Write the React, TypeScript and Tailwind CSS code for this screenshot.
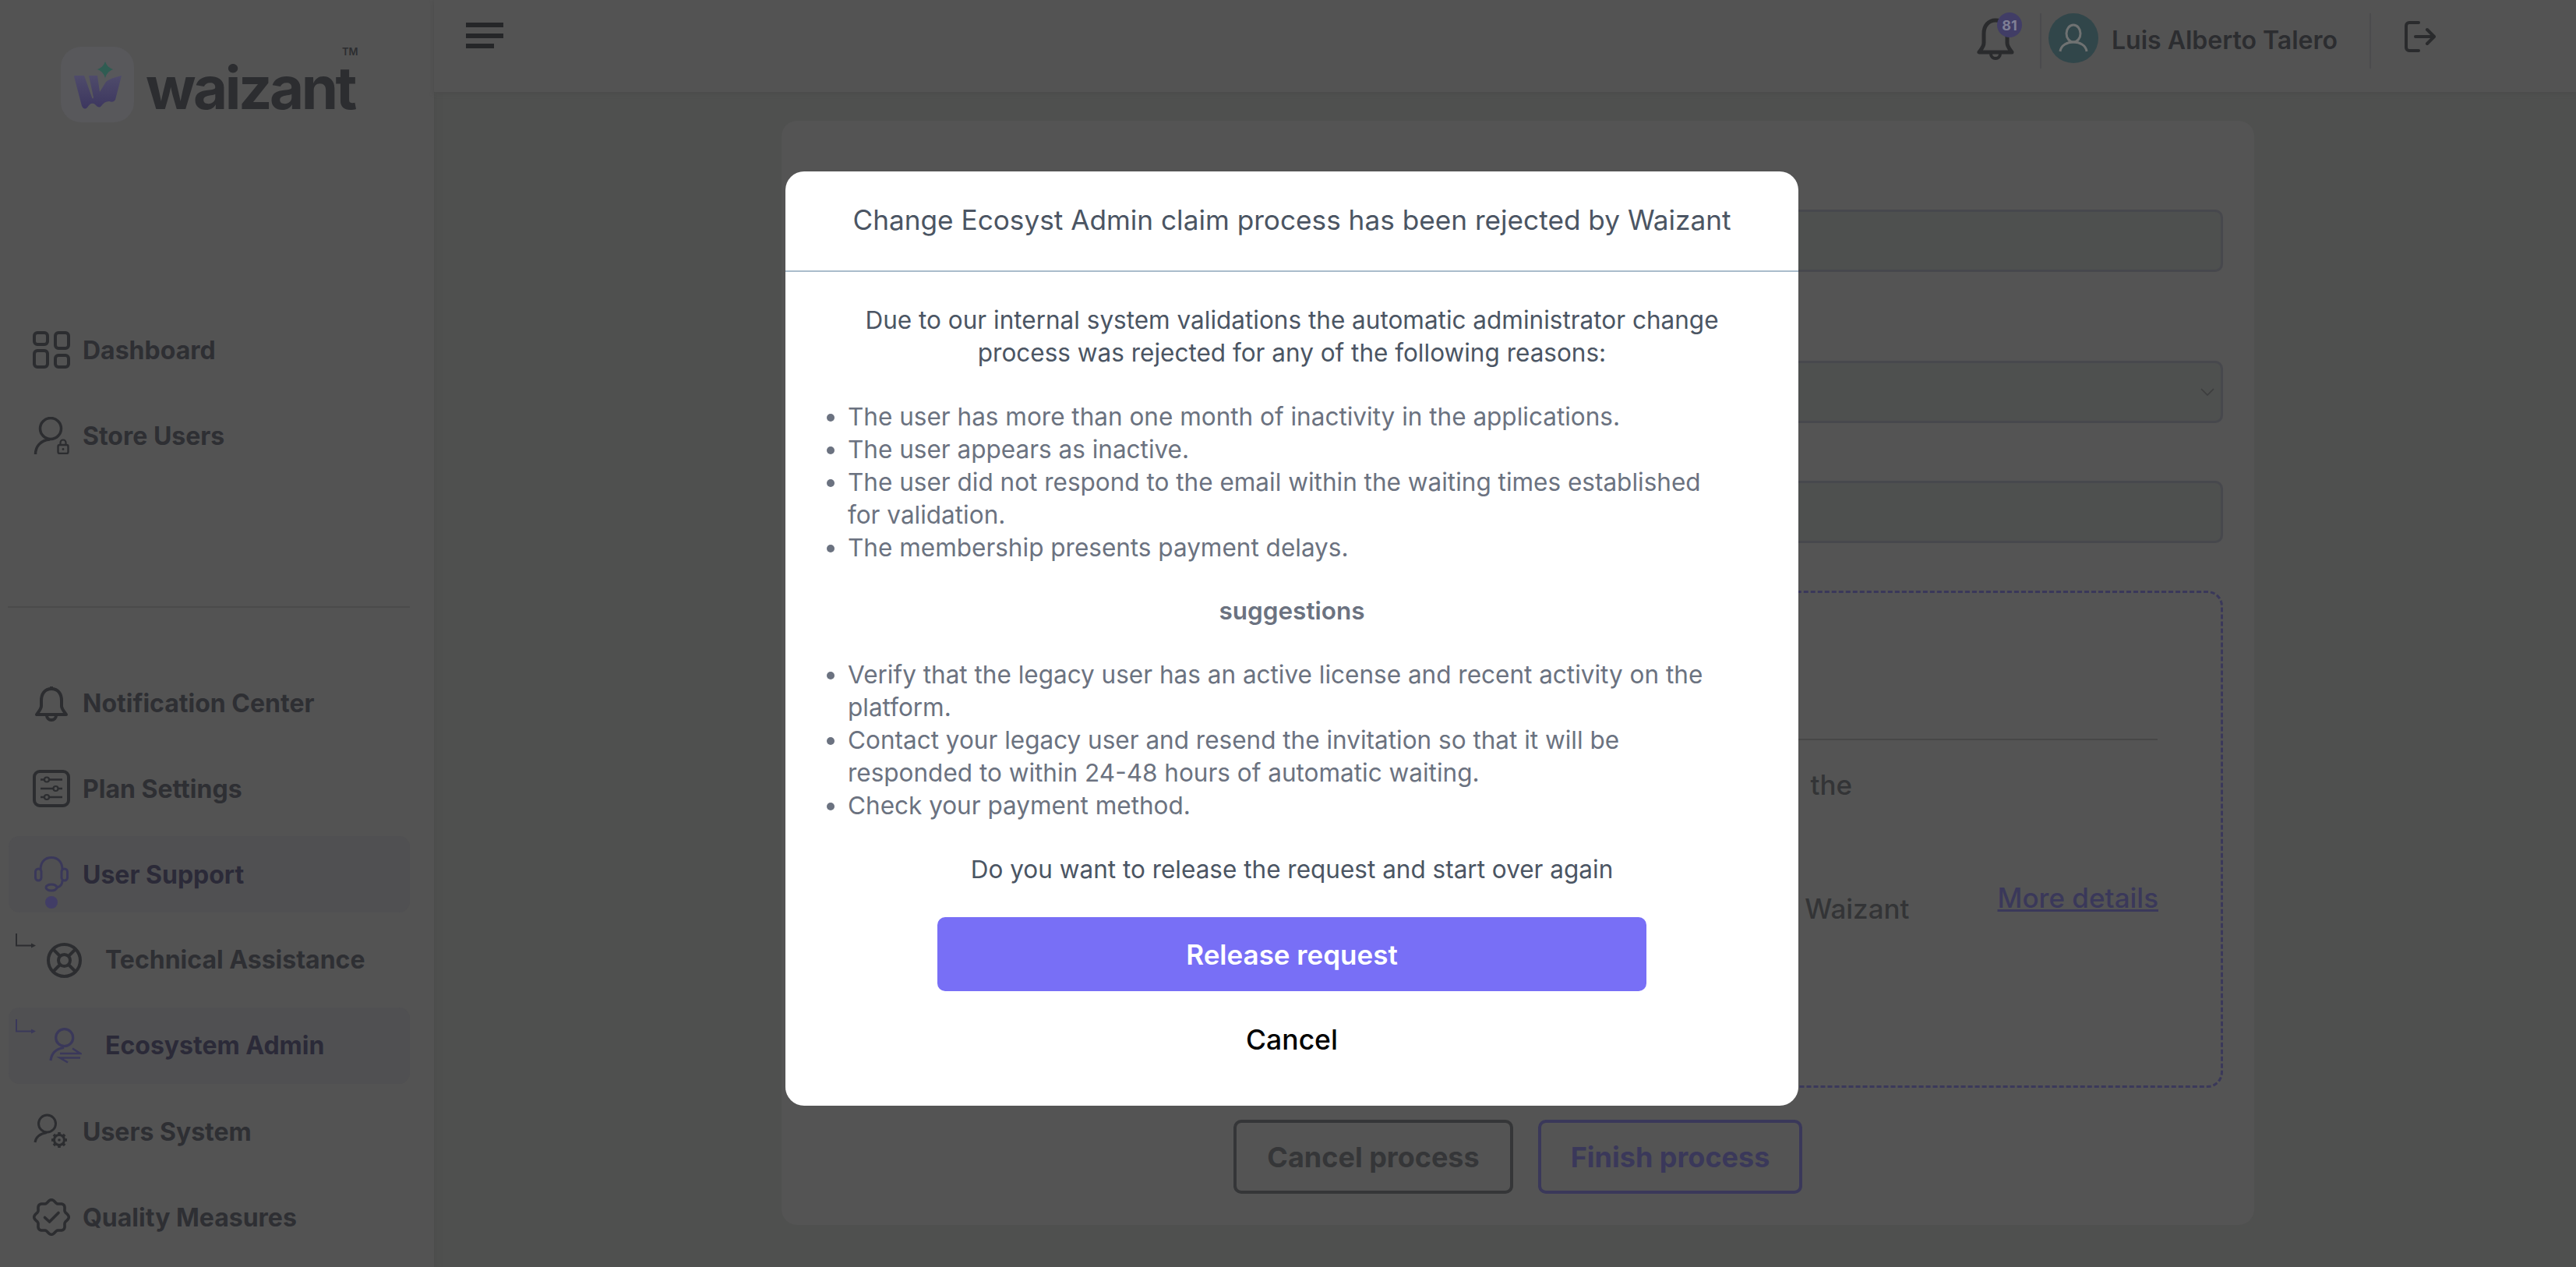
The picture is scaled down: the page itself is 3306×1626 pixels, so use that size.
const font = "font-['Inter',sans-serif]";

function LogoMark() {
  return (
    <svg viewBox="0 0 94 97" className="w-[94px] h-[97px] shrink-0">
      <defs>
        <linearGradient id="logoW" x1="0" y1="0" x2="0" y2="1">
          <stop offset="0" stopColor="#4f4b6b" />
          <stop offset="1" stopColor="#3c365f" />
        </linearGradient>
      </defs>
      <rect width="94" height="97" rx="26" fill="#58585b" />
      <path
        d="M17 38Q17 37 19 37L30 37L40 65Q41 68 42 65L36 37L47 37L50 58L58 45Q64 40 78 37L70 68Q68 72 62 70Q56 70 52 76Q49 80 44 74Q39 70 34 78Q30 82 27 76Z"
        fill="url(#logoW)"
      />
      <path d="M57 17Q59 27 69 29Q59 31 57 42Q55 31 45 29Q55 27 57 17Z" fill="#2f5c52" stroke="#58585b" strokeWidth="1" />
    </svg>
  );
}

function DashboardIcon() {
  return (
    <svg viewBox="0 0 48 48" className="w-12 h-12" fill="none" stroke="#2c2d30" strokeWidth="4">
      <rect x="2" y="2" width="17" height="15" rx="4" />
      <rect x="29" y="2" width="17" height="20" rx="4" />
      <rect x="2" y="25" width="17" height="21" rx="4" />
      <rect x="29" y="31" width="17" height="15" rx="4" />
    </svg>
  );
}

function StoreUsersIcon() {
  return (
    <svg viewBox="0 0 48 48" className="w-12 h-12" fill="none" stroke="#2c2d30" strokeWidth="3.5">
      <circle cx="23" cy="15" r="13.5" />
      <path d="M3.5 48C3.5 38 10 30 22 29" />
      <rect x="32.5" y="36" width="13" height="11" rx="2" strokeWidth="2.4" />
      <path d="M35.5 36V33a3.5 3.5 0 0 1 7 0V36" strokeWidth="2.2" />
      <circle cx="39" cy="41.5" r="1.4" fill="#2c2d30" stroke="none" />
    </svg>
  );
}

function BellIcon() {
  return (
    <svg viewBox="0 0 48 48" className="w-12 h-12" fill="none" stroke="#2c2d30" strokeWidth="4" strokeLinejoin="round">
      <path d="M24 6C15 6 11 13 11 21V28C11 32 7 36 5 39H43C41 36 37 32 37 28V21C37 13 33 6 24 6Z" />
      <path d="M18 40a6 6 0 0 0 12 0" />
      <path d="M24 3V6" />
    </svg>
  );
}

function PlanIcon() {
  return (
    <svg viewBox="0 0 48 48" className="w-12 h-12" fill="none" stroke="#2c2d30" strokeWidth="4">
      <rect x="2" y="2" width="44" height="44" rx="7" />
      <path d="M10 12.5H38M10 24H38M10 35H38" strokeWidth="2.4" />
      <circle cx="18" cy="12.5" r="3" fill="#535353" strokeWidth="2.2" />
      <circle cx="29.5" cy="24" r="3" fill="#535353" strokeWidth="2.2" />
      <circle cx="18" cy="35" r="3" fill="#535353" strokeWidth="2.2" />
    </svg>
  );
}

function HeadsetIcon() {
  return (
    <svg viewBox="0 0 48 98" className="w-12 h-[98px]" fill="none" stroke="#3a385a" strokeWidth="3">
      <path d="M10 43C10 33 16 27.5 24 27.5C32 27.5 38 33 38 43" />
      <rect x="3.5" y="42" width="7.5" height="15" rx="3.7" />
      <rect x="37" y="42" width="7.5" height="15" rx="3.7" />
      <path d="M38 57C38 62 35 65 31 66" />
      <ellipse cx="24" cy="66" rx="7" ry="4" />
      <circle cx="24" cy="85" r="8" fill="#413d66" stroke="none" />
    </svg>
  );
}

function LifeIcon() {
  return (
    <svg viewBox="0 0 45 45" className="w-[45px] h-[45px]" fill="none" stroke="#2c2d30" strokeWidth="4">
      <circle cx="22.5" cy="22.5" r="20.5" />
      <circle cx="22.5" cy="22.5" r="7.5" />
      <path d="M17 17L8 8M28 17L37 8M17 28L8 37M28 28L37 37" />
    </svg>
  );
}

function EcoIcon() {
  return (
    <svg viewBox="0 0 45 48" className="w-[45px] h-12" fill="none" stroke="#3a385a" strokeWidth="3.2">
      <circle cx="22.7" cy="13.7" r="11" />
      <path d="M5 43C6 34 12 28 22 26.5" />
      <path d="M17 34H43L33 27.5" strokeWidth="2.6" />
      <path d="M43 39.5H17L27 45.5" strokeWidth="2.6" />
    </svg>
  );
}

function UsersSystemIcon() {
  const teeth = [0, 45, 90, 135, 180, 225, 270, 315];
  return (
    <svg viewBox="0 0 48 48" className="w-12 h-12" fill="none" stroke="#2c2d30" strokeWidth="3">
      <circle cx="18.5" cy="14" r="11" />
      <path d="M3 38C4 31 9 27 18 25.5" />
      <circle cx="34" cy="35" r="6.5" strokeWidth="3" />
      <circle cx="34" cy="35" r="1.8" fill="#2c2d30" stroke="none" />
      {teeth.map((a) => (
        <path key={a} d="M34 25V28.5" strokeWidth="3.6" transform={`rotate(${a} 34 35)`} />
      ))}
    </svg>
  );
}

// scalloped outline, eight lobes
function QualityIcon() {
  const points = Array.from({ length: 96 }, (_, i) => {
    const t = (i / 96) * Math.PI * 2;
    const r = 20.5 + 1.8 * Math.cos(8 * t);
    return `${(24 + r * Math.cos(t)).toFixed(2)} ${(24 + r * Math.sin(t)).toFixed(2)}`;
  });
  return (
    <svg viewBox="0 0 48 48" className="w-12 h-12" fill="none" stroke="#2c2d30" strokeWidth="3.6" strokeLinejoin="round" strokeLinecap="round">
      <path d={`M${points.join("L")}Z`} />
      <path d="M15.5 24.5L21.5 30L33 18.5" />
    </svg>
  );
}

function SubArrow({ color }: { color: string }) {
  return (
    <svg viewBox="0 0 26 21" className="w-[26px] h-[21px] shrink-0 self-start mt-[15px]" fill="none" stroke={color} strokeWidth="2">
      <path d="M1 0V15.5H22" />
      <path d="M20 12.5L26 15.5L20 18.5Z" fill={color} stroke="none" />
    </svg>
  );
}

function NavRow({ icon, label, active }: { icon: React.ReactNode; label: string; active?: boolean }) {
  return (
    <div className={`flex items-center h-[98px] ml-[11px] mr-[31px] pl-[31px] rounded-[14px] ${active ? "bg-[#505052] text-[#2b2a38]" : "text-[#2e2f33]"}`}>
      <div className="w-12 flex justify-center shrink-0">{icon}</div>
      <span className="ml-4 pt-[2px] text-[32px] font-bold whitespace-nowrap">{label}</span>
    </div>
  );
}

function SubRow({ icon, label, active }: { icon: React.ReactNode; label: string; active?: boolean }) {
  return (
    <div className={`flex items-center h-[98px] ml-[11px] mr-[31px] pl-[9px] rounded-[14px] ${active ? "bg-[#505052] text-[#2b2a38]" : "text-[#2e2f33]"}`}>
      <SubArrow color={active ? "#3a385a" : "#2c2d30"} />
      <div className="ml-[14px] w-[45px] flex justify-center shrink-0">{icon}</div>
      <span className="ml-[30px] text-[32px] font-bold whitespace-nowrap">{label}</span>
    </div>
  );
}

function Sidebar() {
  return (
    <aside className="w-[557px] h-full shrink-0 bg-[#535353] flex flex-col shadow-[2px_0_6px_#4c4c4c]">
      <div className="h-[400px] pl-[78px] pt-[60px] shrink-0">
        <div className="relative flex items-start">
          <LogoMark />
          <span className="ml-[15px] mt-[22px] text-[76px] leading-[60px] font-bold tracking-[-0.045em] text-[#2c2d30]">waizant</span>
          <span className="absolute left-[361px] top-[-1px] text-[13px] leading-[14px] font-semibold text-[#2c2d30]">TM</span>
        </div>
      </div>
      <nav className="flex flex-col gap-3">
        <NavRow icon={<DashboardIcon />} label="Dashboard" />
        <NavRow icon={<StoreUsersIcon />} label="Store Users" />
      </nav>
      <div className="h-[2px] ml-[10px] mr-[31px] mt-[170px] mb-[73px] bg-[#4a4a4a]" />
      <nav className="flex flex-col gap-3">
        <NavRow icon={<BellIcon />} label="Notification Center" />
        <NavRow icon={<PlanIcon />} label="Plan Settings" />
        <NavRow icon={<HeadsetIcon />} label="User Support" active />
        <SubRow icon={<LifeIcon />} label="Technical Assistance" />
        <SubRow icon={<EcoIcon />} label="Ecosystem Admin" active />
        <NavRow icon={<UsersSystemIcon />} label="Users System" />
        <NavRow icon={<QualityIcon />} label="Quality Measures" />
      </nav>
    </aside>
  );
}

function Header() {
  return (
    <header className="h-[118px] shrink-0 bg-[#535353] flex items-start shadow-[0_2px_5px_#4c4c4c]">
      <div className="ml-[41px] mt-[29px] flex flex-col gap-[7.5px] w-12">
        <div className="h-[6px] bg-[#252628]" />
        <div className="h-[6px] bg-[#252628]" />
        <div className="h-[6px] w-9 bg-[#252628]" />
      </div>
      <div className="ml-auto pr-[180px] flex items-start">
        <div className="relative w-12 h-[54px] mt-[23px]">
          <svg viewBox="0 0 48 54" className="w-12 h-[54px]" fill="none" stroke="#2a2b2d" strokeWidth="5" strokeLinejoin="round">
            <path d="M24 3C15 3 9 10 9 20V32C9 37 5 41 3 44H45C43 41 39 37 39 32V20C39 10 33 3 24 3Z" />
            <path d="M18 46a6 6 0 0 0 12 0" strokeWidth="4" />
          </svg>
          <span className="absolute left-[26px] top-[-7px] w-8 h-8 rounded-full bg-[#413d66] text-[#7f7f95] text-[18px] font-bold flex items-center justify-center">81</span>
        </div>
        <div className="ml-[33px] mt-[17px] w-[2px] h-[71px] bg-[#4b4b4d]" />
        <div className="ml-[9px] mt-[17px] w-16 h-16 rounded-full bg-[#31464a]">
          <svg viewBox="0 0 64 64" className="w-16 h-16" fill="none" stroke="#6f7272" strokeWidth="3">
            <ellipse cx="32" cy="26" rx="9" ry="11" />
            <path d="M15 49C16 41 24 37 32 37C40 37 48 41 49 49" />
          </svg>
        </div>
        <div className="ml-[17px] w-[331px] mt-[31px] text-[32px] leading-[42px] font-semibold text-[#2c2d30] whitespace-nowrap">Luis Alberto Talero</div>
        <div className="mt-[17px] w-[2px] h-[71px] bg-[#4b4b4d]" />
        <svg viewBox="0 0 40 40" className="ml-[43px] mt-[27px] w-10 h-10" fill="none" stroke="#2a2b2d" strokeWidth="4" strokeLinecap="round" strokeLinejoin="round">
          <path d="M18 2H6a4 4 0 0 0-4 4V34a4 4 0 0 0 4 4H18" />
          <path d="M14 20H37M29 11L38 20L29 29" />
        </svg>
      </div>
    </header>
  );
}

function FormField({ className, select }: { className: string; select?: boolean }) {
  return (
    <div className={`h-20 rounded-[10px] border-[3px] border-[#47484d] bg-[#4e504f] flex items-center justify-end pr-[8px] ${className}`}>
      {select && (
        <svg viewBox="0 0 18 10" className="w-[18px] h-[10px]" fill="none" stroke="#3c3d3e" strokeWidth="1.6">
          <path d="M1 1L9 9L17 1" />
        </svg>
      )}
    </div>
  );
}

function FormCard() {
  return (
    <section className="ml-[446px] mt-[37px] w-[1890px] h-[1417px] rounded-[20px] bg-[#545454] px-10 pt-[114px] flex flex-col">
      <FormField className="" />
      <FormField className="mt-[114px]" select />
      <FormField className="mt-[74px]" />
      <div className="mt-[61px] h-[638px] rounded-[20px] border-[3px] border-dashed border-[#3a385a] pt-[187px] flex flex-col text-[35px] font-medium text-[#333436]">
        <div className="h-[2px] mr-[81px] bg-[#474747]" />
        <div className="self-end mr-[473px] mt-[36px] leading-[42px]">the</div>
        <div className="flex items-start justify-end mr-[80px] mt-[103px]">
          <span className="mt-[14px] leading-[42px]">Waizant</span>
          <a className="ml-[113px] leading-[42px] text-[#3a385a] underline">More details</a>
        </div>
      </div>
      <div className="mt-[41px] flex justify-center gap-8 text-[36px] font-bold">
        <button className="w-[359px] h-[95px] rounded-[10px] border-[4px] border-[#353638] text-[#353638]">Cancel process</button>
        <button className="w-[339px] h-[95px] rounded-[10px] border-[4px] border-[#3a385a] text-[#3a385a]">Finish process</button>
      </div>
    </section>
  );
}

function RejectedModal() {
  return (
    <div className="fixed inset-0 flex items-center justify-center pl-[10px] pt-[13px]">
      <div className="w-[1300px] rounded-[24px] bg-white flex flex-col">
        <h2 className="h-[129px] pb-[2px] border-b-2 border-[#a9bccb] flex items-center justify-center text-[35.2px] text-[#4b5563] font-normal whitespace-nowrap">
          Change Ecosyst Admin claim process has been rejected by Waizant
        </h2>
        <div className="pt-[41px] pb-[63px] text-[31.5px] leading-[42px] flex flex-col">
          <p className="text-center text-[#4b5563]">
            Due to our internal system validations the automatic administrator change
            <br />
            process was rejected for any of the following reasons:
          </p>
          <ul className="mt-10 ml-20 list-disc text-[#6b7280] whitespace-nowrap">
            <li>The user has more than one month of inactivity in the applications.</li>
            <li>The user appears as inactive.</li>
            <li>
              The user did not respond to the email within the waiting times established
              <br />
              for validation.
            </li>
            <li>The membership presents payment delays.</li>
          </ul>
          <p className="mt-[39px] text-center font-semibold text-[#6b7280]">suggestions</p>
          <ul className="mt-10 ml-20 list-disc text-[#6b7280] whitespace-nowrap">
            <li>
              Verify that the legacy user has an active license and recent activity on the
              <br />
              platform.
            </li>
            <li>
              Contact your legacy user and resend the invitation so that it will be
              <br />
              responded to within 24-48 hours of automatic waiting.
            </li>
            <li>Check your payment method.</li>
          </ul>
          <p className="mt-10 text-center text-[#4b5563]">Do you want to release the request and start over again</p>
          <button className="mt-10 self-center w-[910px] h-[95px] rounded-[10px] bg-[#786ff6] text-white text-[35px] font-semibold">Release request</button>
          <button className="mt-[42px] self-center text-[35.5px] font-medium text-black">Cancel</button>
        </div>
      </div>
    </div>
  );
}

export default function App() {
  return (
    <div className={`h-screen w-full overflow-hidden flex bg-[#4f504f] ${font}`}>
      <Sidebar />
      <main className="flex-1 flex flex-col min-w-0">
        <Header />
        <FormCard />
      </main>
      <RejectedModal />
    </div>
  );
}
